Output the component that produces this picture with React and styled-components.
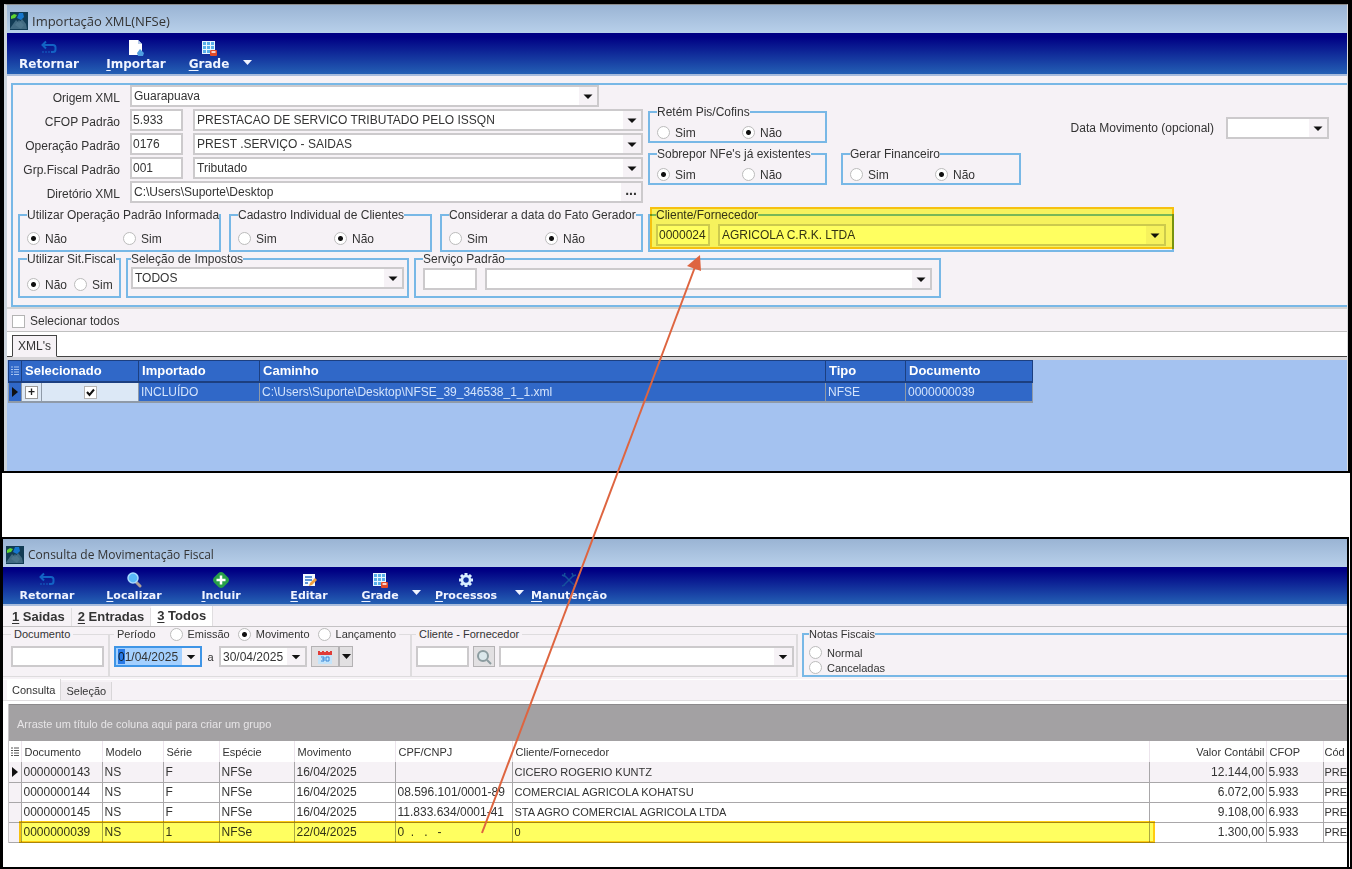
import React from 'react';
import styled, { createGlobalStyle, css } from 'styled-components';

const colors = {
  panel: '#f6f2f6',
  line: '#c4c2c4',
  group: '#78b8e6',
  grid: '#3068c8',
  gridLine: '#a9a7a9',
  arrow: '#de6540',
  highlight: '#ffff60',
};

const GlobalStyle = createGlobalStyle`
  * {
    box-sizing: border-box;
  }
  body {
    margin: 0;
    background: #000;
    color: #333;
    font-family: "Liberation Sans", Arial, sans-serif;
    font-size: 12px;
    line-height: 14px;
  }
  button, input, select {
    margin: 0;
    font: inherit;
    color: inherit;
  }
`;

const Page = styled.main`
  position: relative;
  display: flex;
  flex-direction: column;
  min-height: 100vh;
  padding: 0 2px 2px;
  background: #000;
  overflow: hidden;
`;

const Gap = styled.div`
  height: 64px;
  background: #fff;
`;

const ImportWindow = styled.section`
  margin: 4px 2px 2px;
  border-top: 1px solid #8c8c8c;
  border-left: 3px solid #ccd4dc;
  border-right: 1px solid #dcdcdc;
  background: ${colors.panel};
`;

const SearchWindow = styled.section`
  flex: 1;
  border: 2px solid #000;
  border-bottom: 0;
  border-left-width: 1px;
  margin-right: 1px;
  background: #fff;
  box-shadow: 1px 0 #fff;
  font-size: 11px;
  overflow: hidden;
`;

const TitleBar = styled.header`
  display: flex;
  align-items: center;
  gap: 4px;
  height: 28px;
  padding: 3px 3px 0;
  background: linear-gradient(#9ab4d4, #b8d0ea);
  font-family: "Open Sans", sans-serif;
`;

const Title = styled.h1`
  margin: 0;
  font-size: ${({ $size }) => $size}px;
  font-weight: 400;
  line-height: 18px;
`;

const Toolbar = styled.nav`
  display: flex;
  height: ${({ $height }) => $height}px;
  padding-top: 4px;
  border-bottom: 2px solid #a8bcdc;
  background: linear-gradient(#000084 10%, #2460b4);
  color: #f0f4ff;
  font-family: "DejaVu Sans", sans-serif;
  font-size: ${({ $size }) => $size}px;
  font-weight: 700;
`;

const ToolButton = styled.button`
  display: flex;
  flex: 0 0 ${({ $width }) => $width}px;
  flex-direction: column;
  align-items: center;
  justify-content: ${({ $menu }) => ($menu ? 'flex-end' : 'center')};
  gap: 1px;
  padding: 0 0 ${({ $menu }) => ($menu ? 9 : 0)}px;
  border: 0;
  background: none;
  white-space: nowrap;

  u {
    text-underline-offset: 2px;
  }
`;

const Form = styled.form`
  margin: 7px 0 0 4px;
  padding-bottom: 7px;
  border: 2px solid ${colors.group};
  border-right: 0;
`;

const FormTop = styled.div`
  display: flex;
  gap: 5px;
  margin-bottom: 3px;
`;

const Fields = styled.div`
  flex: 0 0 630px;
`;

const FieldRow = styled.div`
  display: grid;
  grid-template-columns: 107px 53px 1fr;
  height: 24px;
  column-gap: 10px;

  label {
    text-align: right;
    padding-top: 6px;
  }
`;

const Span = styled.div`
  grid-column: 2 / -1;
  margin-right: ${({ $short }) => ($short ? 44 : 0)}px;
`;

const inputBox = css`
  height: ${({ $height }) => $height || 22}px;
  border: 2px solid #cccacc;
  background: #fff;
`;

const TextInput = styled.input`
  ${inputBox}
  display: block;
  flex: ${({ $width }) => ($width ? `0 0 ${$width}px` : 'none')};
  width: ${({ $width }) => ($width ? `${$width}px` : '100%')};
  padding: 0 1px;
`;

const FieldBox = styled.div`
  ${inputBox}
  position: relative;
  display: flex;
  flex: ${({ $width }) => ($width ? `0 0 ${$width}px` : '1')};
  min-width: 0;
  border-color: ${({ $active }) => ($active ? '#3f95e6' : '#cccacc')};
  background: ${({ $active }) => ($active ? '#a4d0ff' : '#fff')};
  font-size: 12px;

  select, input {
    flex: 1;
    min-width: 0;
    width: 100%;
    padding: 0 2px;
    border: 0;
    background: transparent;
    appearance: none;
    outline: 0;
  }
  svg {
    position: absolute;
    right: 0;
    top: 0;
    width: 18px;
    height: 100%;
    background: ${colors.panel};
    pointer-events: none;
  }
`;

const MoreButton = styled.button`
  width: 20px;
  padding: 0 0 4px;
  border: 0;
  background: ${colors.panel};
  font-size: 14px;
  font-weight: 700;
  line-height: 12px;
`;

const SelectedDigit = styled.span`
  position: absolute;
  left: 2px;
  top: 1px;
  width: 7px;
  height: 15px;
  background: #3f95e6;
  mix-blend-mode: multiply;
`;

const Group = styled.fieldset`
  position: relative;
  display: flex;
  flex: 0 0 ${({ $width }) => $width}px;
  width: ${({ $width }) => $width}px;
  height: ${({ $height }) => $height}px;
  align-items: flex-start;
  gap: ${({ $gap }) => $gap || 0}px;
  min-width: 0;
  margin: 0;
  padding: ${({ $pad }) => $pad || '6px 7px 0'};
  border: 2px solid ${colors.group};
  white-space: nowrap;

  legend {
    padding: 0;
    line-height: 14px;
  }
`;

const GroupRow = styled.div`
  display: flex;
  gap: 5px;
  padding-left: 5px;
`;

const OptionGroups = styled.div`
  display: flex;
  gap: 8px;
`;

const Options = styled.div`
  display: grid;
  grid-template-columns: repeat(2, ${({ $step }) => $step}px);
`;

const SideGroups = styled.div`
  display: grid;
  grid-template-columns: 179px 180px;
  align-content: start;
  column-gap: 14px;
  row-gap: 4px;
  padding-top: 20px;

  fieldset:nth-child(2) {
    grid-column: 1;
  }
`;

const DateMovement = styled.div`
  display: flex;
  align-items: center;
  align-self: flex-start;
  gap: 12px;
  margin: 32px 18px 0 auto;
`;

const Highlight = styled.div`
  position: absolute;
  inset: ${({ $inset }) => $inset};
  border: 2px solid #ffcc10;
  background: ${colors.highlight};
  mix-blend-mode: multiply;
  pointer-events: none;
`;

const Choice = styled.label`
  display: flex;
  align-items: center;
  gap: 5px;
  height: ${({ $height }) => $height || 15}px;
`;

const RadioInput = styled.input`
  flex: 0 0 13px;
  width: 13px;
  height: 13px;
  border: 1px solid #bcbcbc;
  border-radius: 50%;
  background: #fff;
  appearance: none;

  &:checked {
    background: radial-gradient(circle, #111 2px, #fff 3px);
  }
`;

const CheckInput = styled.input`
  width: 13px;
  height: 13px;
  border: 1px solid #b4b4b4;
  background: #fff;
  appearance: none;
`;

const SelectAll = styled.div`
  display: flex;
  align-items: center;
  height: 25px;
  padding: 2px 5px 0;
  border-top: 2px solid #d4d4d4;
  border-bottom: 1px solid #c0c0c0;
`;

const XmlTabs = styled.div`
  display: flex;
  align-items: flex-end;
  height: 28px;
  padding-left: 5px;
  border-bottom: 3px solid #d8d6d8;
  background: linear-gradient(#444, #444) bottom / 100% 1px no-repeat #fff;
  background-clip: padding-box;
`;

const XmlTab = styled.button`
  height: 22px;
  padding: 0 5px;
  border: 1px solid #444;
  border-bottom-color: ${colors.panel};
  background: ${colors.panel};
`;

const XmlGrid = styled.div`
  min-height: 111px;
  padding-left: 1px;
  background: #a4c2f0;
`;

const XmlTable = styled.table`
  width: 1024px;
  table-layout: fixed;
  border-collapse: collapse;
  background: ${colors.grid};

  th {
    height: 21px;
    padding: 1px 3px 0;
    border: 1px solid #1c3f80;
    border-bottom-width: 2px;
    color: #fff;
    font-size: 13px;
    text-align: left;
  }
  td {
    height: 20px;
    padding: 1px 2px 0;
    border: 1px solid #8f9aa8;
    border-bottom-width: 2px;
    color: #d4e4fc;
    text-align: left;
  }
  td:first-child, th:first-child {
    padding: 0;
    text-align: center;
  }
  svg {
    display: block;
    margin: auto;
  }
`;

const PlainCell = styled.td`
  && {
    background: #dce8f6;
    text-align: center;
    color: #222;
  }
`;

const Expand = styled.button`
  display: block;
  width: 13px;
  height: 13px;
  margin: auto;
  padding: 0;
  border: 1px solid #999;
  background: #fff;
  line-height: 10px;
  font-weight: 700;
`;

const CheckBox = styled.span`
  position: relative;
  display: block;
  width: 13px;
  height: 13px;
  margin: auto;

  input {
    display: block;
  }
  svg {
    position: absolute;
    inset: 2px;
    pointer-events: none;
  }
`;

const MainTabs = styled.div`
  display: flex;
  align-items: flex-end;
  height: 21px;
  border-bottom: 1px solid ${colors.line};
  background: ${colors.panel};
`;

const MainTab = styled.button`
  height: ${({ $active }) => ($active ? 20 : 18)}px;
  padding: 0 6px;
  border: 0;
  border-right: 1px solid #e0dee0;
  background: ${({ $active }) => ($active ? '#fff' : 'transparent')};
  font-size: 13px;
  font-weight: 700;
  white-space: nowrap;

  u {
    text-underline-offset: 2px;
  }
  &:first-child {
    padding-left: 9px;
  }
`;

const Filters = styled.form`
  display: flex;
  height: 53px;
  background: ${colors.panel};
  border-bottom: 1px solid #fff;
`;

const FilterGroup = styled(Group)`
  border: 1px solid #dedcde;
  border-left: 0;
  border-right-width: 2px;

  legend {
    display: flex;
    align-items: center;
    gap: 8px;
    padding: 0 3px;
    background: ${colors.panel};
  }
`;

const PeriodLabel = styled.span`
  padding-right: 6px;
`;

const NotesGroup = styled(Group)`
  flex: 1 1 0;
  flex-direction: column;
  margin-left: 4px;
  border-right: 0;
`;

const SquareButton = styled.button`
  display: flex;
  flex: 0 0 ${({ $width }) => $width}px;
  align-items: center;
  justify-content: center;
  height: 21px;
  padding: 0;
  border: 1px solid #b4b2b4;
  background: #e2e0e2;
`;

const Between = styled.span`
  width: 17px;
  padding-top: 4px;
  text-align: center;
`;

const CalendarButtons = styled.span`
  display: flex;
  padding-left: 4px;
`;

const SubTabs = styled.div`
  display: flex;
  align-items: flex-end;
  height: 21px;
  padding-left: 4px;
  border-bottom: 1px solid #e0dee0;
  background: ${colors.panel};
`;

const SubTab = styled.button`
  height: ${({ $active }) => ($active ? 21 : 18)}px;
  padding: 0 5px;
  border: 0;
  border-right: 1px solid #d8d6d8;
  background: ${({ $active }) => ($active ? '#fff' : '#f0ecf0')};
`;

const Results = styled.div`
  margin-top: 3px;
  margin-left: 5px;
  border-left: 1px solid #c8c6c8;
`;

const DropZone = styled.p`
  height: 37px;
  margin: 0;
  padding: 12px 8px;
  border-top: 1px solid #8c8a8c;
  background: #a3a1a3;
  color: #e6e4e6;
`;

const TableWrap = styled.div`
  position: relative;
`;

const ResultTable = styled.table`
  width: 100%;
  table-layout: fixed;
  border-collapse: collapse;

  th {
    height: 21px;
    padding: 0 3px;
    border-right: 1px solid #ece4ec;
    font-weight: 400;
    text-align: left;
  }
  td {
    height: 20px;
    padding: 0 3px 0 2px;
    border-right: 1px solid ${colors.gridLine};
    border-bottom: 1px solid ${colors.gridLine};
    font-size: 12px;
  }
  th, td {
    overflow: hidden;
    white-space: pre;
  }
  th:first-child, td:first-child {
    padding: 0;
    background: ${colors.panel};
  }
  th:first-child {
    background: #fff;
  }
  td:nth-child(8), td:last-child {
    font-size: 11px;
  }
  th:nth-child(9), td:nth-child(9) {
    padding: 0 1px;
    text-align: right;
  }
  th:last-child, td:last-child {
    padding: 0 0 0 1px;
    border-right: 0;
  }
  tbody tr:first-child {
    background: ${colors.panel};
  }
  svg {
    display: block;
    margin: auto;
  }
`;

// arrow that ties the highlighted row to the highlighted client
const Pointer = styled.svg`
  position: absolute;
  left: 470px;
  top: 250px;
  pointer-events: none;
`;

const Triangle = () => (
  <svg viewBox="0 0 18 18" aria-hidden="true">
    <path d="M4.5 7.5h9L9 12z" fill="#111" />
  </svg>
);

const SmallArrow = ({ color = '#111' }) => (
  <svg width="9" height="5" viewBox="0 0 9 5" aria-hidden="true">
    <path d="M0 0h9L4.5 5z" fill={color} />
  </svg>
);

const RowMarker = () => (
  <svg width="6" height="10" viewBox="0 0 6 10" aria-hidden="true">
    <path d="M0 0l6 5-6 5z" fill="#111" />
  </svg>
);

const ListIcon = ({ color }) => (
  <svg width="8" height="10" viewBox="0 0 8 10" aria-hidden="true">
    <path d="M0 1h2M3 1h5M0 3.5h2M3 3.5h5M0 6h2M3 6h5M0 8.5h2M3 8.5h5" stroke={color} />
  </svg>
);

const AppIcon = () => (
  <svg width="18" height="18" viewBox="0 0 18 18" aria-hidden="true">
    <rect width="18" height="18" fill="#123c55" />
    <path d="M1 15L6 8l3 3 3-4 4 5 1 5H0z" fill="#426b82" />
    <path d="M5 13l4-5 5 5-3 4z" fill="#527a90" opacity=".7" />
    <path d="M9 1h4l1 4-3 3-4-2z" fill="#1676cc" />
    <path d="M1 4l3-2 3 1-2 3-4 1z" fill="#5fd62f" />
  </svg>
);

const icons = {
  back: (
    <g fill="none" stroke="#1263c4" strokeWidth="2">
      <path d="M2 5h10q2.5 0 2.5 2.5v2q0 2.500-2.500 2.500h-2" />
      <path d="M5 1.500L1.500 5 5 8.500" />
      <path d="M1 12h9" strokeDasharray="2 1" opacity=".5" />
    </g>
  ),
  file: (
    <g>
      <path d="M1 0h9l4 4v11H1z" fill="#fff" />
      <path d="M10 0v4h4z" fill="#b8cce8" />
      <path d="M12 9l4 4-1 3h-5l-1-3z" fill="#4f9ee0" />
    </g>
  ),
  grid: (
    <g>
      <path d="M1 1h13v13H1z" fill="#e8f6ff" />
      <path d="M2 2h3v3H2zM6 2h3v3H6zM10 2h3v3h-3zM2 6h3v3H2zM6 6h3v3H6zM10 6h3v3h-3zM2 10h3v3H2zM6 10h3v3H6z" fill="#58b0ea" />
      <rect x="9" y="10" width="7" height="6" rx="1" fill="#e24a28" />
      <path d="M10.500 12h4" stroke="#fff" strokeWidth="1.500" />
    </g>
  ),
  search: (
    <g>
      <path d="M10 10l4 4" stroke="#b0a098" strokeWidth="3" strokeLinecap="round" />
      <circle cx="7" cy="6" r="5" fill="#58b8f8" stroke="#a8dcff" strokeWidth="1.500" />
    </g>
  ),
  add: (
    <g>
      <path d="M8 0q1.500 0 2.500 1L15 5.500q2 2.500 0 5L10.500 15q-2.500 2-5 0L1 10.500q-2-2.500 0-5L5.500 1Q6.500 0 8 0z" fill="#28a048" />
      <path d="M8 3.500v9M3.500 8h9" stroke="#fff" strokeWidth="2.500" />
    </g>
  ),
  edit: (
    <g>
      <path d="M2 2h12v12H2z" fill="#f4faff" />
      <path d="M4 5h7M4 8h7M4 11h3" stroke="#2870c8" strokeWidth="1.500" />
      <path d="M8 14l1-3 5-5 2 2-5 5z" fill="#f0a040" />
    </g>
  ),
  gear: (
    <g>
      <path d="M8 1v14M1 8h14M3 3l10 10M13 3L3 13" stroke="#d8eeff" strokeWidth="3" />
      <circle cx="8" cy="8" r="4" fill="#1030a0" stroke="#d8eeff" strokeWidth="2.500" />
    </g>
  ),
  tools: (
    <g stroke="#15509c" strokeWidth="1.500" fill="none">
      <path d="M3 3l10 10M13 3L3 13" />
      <path d="M1 3l2 1 1-3M15 3l-3 1-1-3M1 14l3-1M15 14l-3 1" />
    </g>
  ),
};

const Tool = ({ icon, label, width, access = true }) => (
  <ToolButton type="button" $width={width}>
    <svg width="16" height="16" viewBox="0 0 16 16" aria-hidden="true">{icons[icon]}</svg>
    <span>
      {access ? <u>{label[0]}</u> : label[0]}
      {label.slice(1)}
    </span>
  </ToolButton>
);

const MenuArrow = ({ width, label }) => (
  <ToolButton type="button" $width={width} $menu aria-label={label}>
    <SmallArrow color="#f0f4ff" />
  </ToolButton>
);

const Select = ({ id, label, value = '', width, height }) => (
  <FieldBox $width={width} $height={height}>
    <select id={id} aria-label={label} defaultValue={value}>
      <option value={value}>{value}</option>
    </select>
    <Triangle />
  </FieldBox>
);

const DateField = ({ label, value, active }) => (
  <FieldBox $width={88} $height={21} $active={active}>
    <input aria-label={label} defaultValue={value} />
    {active && <SelectedDigit />}
    <Triangle />
  </FieldBox>
);

const Radio = ({ name, label, checked, height }) => (
  <Choice $height={height}>
    <RadioInput type="radio" name={name} defaultChecked={checked} />
    {label}
  </Choice>
);

const RadioGroup = ({
  name, title, options, checked, step, ...size
}) => (
  <Group $width={size.width} $height={size.height} $pad={size.pad}>
    <legend>{title}</legend>
    <Options $step={step}>
      {options.map((option) => (
        <Radio key={option} name={name} label={option} checked={option === checked} />
      ))}
    </Options>
  </Group>
);

const codes = [
  { id: 'cfop', label: 'CFOP Padrão', code: '5.933', text: 'PRESTACAO DE SERVICO TRIBUTADO PELO ISSQN' },
  { id: 'operacao', label: 'Operação Padrão', code: '0176', text: 'PREST .SERVIÇO - SAIDAS' },
  { id: 'grupo', label: 'Grp.Fiscal Padrão', code: '001', text: 'Tributado' },
];

const columns = [
  ['Documento', 81], ['Modelo', 61], ['Série', 56], ['Espécie', 75], ['Movimento', 101],
  ['CPF/CNPJ', 117], ['Cliente/Fornecedor', null], ['Valor Contábil', 117], ['CFOP', 57], ['Cód', 24],
];

const rows = [
  ['0000000143', 'NS', 'F', 'NFSe', '16/04/2025', '', 'CICERO ROGERIO KUNTZ', '12.144,00', '5.933', 'PRE'],
  ['0000000144', 'NS', 'F', 'NFSe', '16/04/2025', '08.596.101/0001-89', 'COMERCIAL AGRICOLA KOHATSU', '6.072,00', '5.933', 'PRE'],
  ['0000000145', 'NS', 'F', 'NFSe', '16/04/2025', '11.833.634/0001-41', 'STA AGRO COMERCIAL AGRICOLA LTDA', '9.108,00', '6.933', 'PRE'],
  ['0000000039', 'NS', '1', 'NFSe', '22/04/2025', '0  .   .   -', '0', '1.300,00', '5.933', 'PRE'],
];

const ImportForm = () => (
  <Form>
    <FormTop>
      <Fields>
        <FieldRow>
          <label htmlFor="origem">Origem XML</label>
          <Span $short><Select id="origem" value="Guarapuava" /></Span>
        </FieldRow>
        {codes.map(({
          id, label, code, text,
        }) => (
          <FieldRow key={id}>
            <label htmlFor={id}>{label}</label>
            <TextInput id={id} defaultValue={code} />
            <Select label={`${label} descrição`} value={text} />
          </FieldRow>
        ))}
        <FieldRow>
          <label htmlFor="diretorio">Diretório XML</label>
          <Span>
            <FieldBox>
              <input id="diretorio" defaultValue="C:\Users\Suporte\Desktop" />
              <MoreButton type="button" aria-label="Procurar">...</MoreButton>
            </FieldBox>
          </Span>
        </FieldRow>
      </Fields>
      <SideGroups>
        <RadioGroup name="retem" title="Retém Pis/Cofins" options={['Sim', 'Não']} checked="Não" step={85} width={179} height={38} />
        <RadioGroup name="sobrepor" title="Sobrepor NFe's já existentes" options={['Sim', 'Não']} checked="Sim" step={85} width={179} height={38} />
        <RadioGroup name="financeiro" title="Gerar Financeiro" options={['Sim', 'Não']} checked="Não" step={85} width={180} height={38} />
      </SideGroups>
      <DateMovement>
        <label htmlFor="data">Data Movimento (opcional)</label>
        <Select id="data" width={103} />
      </DateMovement>
    </FormTop>
    <GroupRow>
      <OptionGroups>
        <RadioGroup name="utilizar" title="Utilizar Operação Padrão Informada" options={['Não', 'Sim']} checked="Não" step={96} width={203} height={44} pad="9px 7px 0" />
        <RadioGroup name="cadastro" title="Cadastro Individual de Clientes" options={['Sim', 'Não']} checked="Não" step={96} width={203} height={44} pad="9px 7px 0" />
        <RadioGroup name="considerar" title="Considerar a data do Fato Gerador" options={['Sim', 'Não']} checked="Não" step={96} width={203} height={44} pad="9px 7px 0" />
      </OptionGroups>
      <Group $width={526} $height={44} $gap={8} $pad="2px 6px 0">
        <legend>Cliente/Fornecedor</legend>
        <TextInput aria-label="Código do cliente" defaultValue="0000024" $width={54} />
        <Select label="Cliente" value="AGRICOLA C.R.K. LTDA" />
        <Highlight $inset="-15px -2px 1px 0" />
      </Group>
    </GroupRow>
    <GroupRow>
      <RadioGroup name="sit" title="Utilizar Sit.Fiscal" options={['Não', 'Sim']} checked="Não" step={47} width={103} height={46} pad="11px 7px 0" />
      <Group $width={283} $height={46} $pad="1px 3px 0">
        <legend>Seleção de Impostos</legend>
        <Select label="Seleção de Impostos" value="TODOS" />
      </Group>
      <Group $width={527} $height={46} $gap={8} $pad="2px 7px 0">
        <legend>Serviço Padrão</legend>
        <TextInput aria-label="Código do serviço" $width={54} />
        <Select label="Serviço" />
      </Group>
    </GroupRow>
  </Form>
);

const XmlList = () => (
  <XmlGrid>
    <XmlTable>
      <colgroup>
        <col width="13" />
        <col width="20" />
        <col width="97" />
        <col width="121" />
        <col width="566" />
        <col width="80" />
        <col width="127" />
      </colgroup>
      <thead>
        <tr>
          <th aria-label="Menu"><ListIcon color="#a8c4f0" /></th>
          <th colSpan="2">Selecionado</th>
          <th>Importado</th>
          <th>Caminho</th>
          <th>Tipo</th>
          <th>Documento</th>
        </tr>
      </thead>
      <tbody>
        <tr>
          <td><RowMarker /></td>
          <PlainCell><Expand type="button">+</Expand></PlainCell>
          <PlainCell>
            <CheckBox>
              <CheckInput type="checkbox" aria-label="Selecionado" defaultChecked />
              <svg width="9" height="9" viewBox="0 0 9 9" aria-hidden="true">
                <path d="M1 4l2.500 3L8 1.500" fill="none" stroke="#111" strokeWidth="2" />
              </svg>
            </CheckBox>
          </PlainCell>
          <td>INCLUÍDO</td>
          <td>C:\Users\Suporte\Desktop\NFSE_39_346538_1_1.xml</td>
          <td>NFSE</td>
          <td>0000000039</td>
        </tr>
      </tbody>
    </XmlTable>
  </XmlGrid>
);

const SearchFilters = () => (
  <Filters>
    <FilterGroup $width={107} $height={50} $pad="5px 4px 0 8px">
      <legend>Documento</legend>
      <TextInput aria-label="Documento" $width={93} $height={21} />
    </FilterGroup>
    <FilterGroup $width={302} $height={50} $pad="5px 3px 0 4px">
      <legend>
        <PeriodLabel>Período</PeriodLabel>
        <Radio name="periodo" label="Emissão" height={14} />
        <Radio name="periodo" label="Movimento" checked height={14} />
        <Radio name="periodo" label="Lançamento" height={14} />
      </legend>
      <DateField label="Data inicial" value="01/04/2025" active />
      <Between>a</Between>
      <DateField label="Data final" value="30/04/2025" />
      <CalendarButtons>
        <SquareButton type="button" $width={28} aria-label="Calendário">
          <svg width="14" height="14" viewBox="0 0 14 14" aria-hidden="true">
            <path d="M0 2h14v12H0z" fill="#c4e4fa" />
            <path d="M0 1h2v1h2V1h2v1h2V1h2v1h2V1h2v4H0z" fill="#e03c38" />
            <path d="M3 7h3v4H3M4 9h2M8 7h3v4H8z" fill="none" stroke="#3888d8" />
          </svg>
        </SquareButton>
        <SquareButton type="button" $width={14} aria-label="Períodos"><SmallArrow /></SquareButton>
      </CalendarButtons>
    </FilterGroup>
    <FilterGroup $width={386} $height={50} $gap={4} $pad="5px 2px 0 4px">
      <legend>Cliente - Fornecedor</legend>
      <TextInput aria-label="Código" $width={53} $height={21} />
      <SquareButton type="button" $width={22} aria-label="Buscar">
        <svg width="16" height="16" viewBox="0 0 16 16" aria-hidden="true">
          <circle cx="7" cy="7" r="5" fill="#dce8ec" stroke="#8c9ca0" strokeWidth="2" />
          <path d="M11 11l4 4" stroke="#8c9ca0" strokeWidth="2" />
        </svg>
      </SquareButton>
      <Select label="Cliente - Fornecedor" height={21} />
    </FilterGroup>
    <NotesGroup $height={50} $pad="4px 5px 0">
      <legend>Notas Fiscais</legend>
      <Radio name="notas" label="Normal" />
      <Radio name="notas" label="Canceladas" />
    </NotesGroup>
  </Filters>
);

const ResultList = () => (
  <Results>
    <DropZone>Arraste um título de coluna aqui para criar um grupo</DropZone>
    <TableWrap>
      <ResultTable>
        <colgroup>
          <col width="12" />
          {columns.map(([name, width]) => <col key={name} width={width || undefined} />)}
        </colgroup>
        <thead>
          <tr>
            <th aria-label="Menu"><ListIcon color="#555" /></th>
            {columns.map(([name]) => <th key={name}>{name}</th>)}
          </tr>
        </thead>
        <tbody>
          {rows.map((row, index) => (
            <tr key={row[0]}>
              <td>{index === 0 && <RowMarker />}</td>
              {row.map((value, cell) => <td key={columns[cell][0]}>{value}</td>)}
            </tr>
          ))}
        </tbody>
      </ResultTable>
      <Highlight $inset="80px 192px 0 10px" />
    </TableWrap>
  </Results>
);

const App = () => (
  <Page>
    <GlobalStyle />
    <ImportWindow>
      <TitleBar>
        <AppIcon />
        <Title $size={13}>Importação XML(NFSe)</Title>
      </TitleBar>
      <Toolbar $height={43} $size={12}>
        <Tool icon="back" label="Retornar" width={84} access={false} />
        <Tool icon="file" label="Importar" width={90} />
        <Tool icon="grid" label="Grade" width={56} />
        <MenuArrow width={20} label="Opções de grade" />
      </Toolbar>
      <ImportForm />
      <SelectAll>
        <Choice>
          <CheckInput type="checkbox" />
          Selecionar todos
        </Choice>
      </SelectAll>
      <XmlTabs>
        <XmlTab type="button">XML&apos;s</XmlTab>
      </XmlTabs>
      <XmlList />
    </ImportWindow>
    <Gap />
    <SearchWindow>
      <TitleBar>
        <AppIcon />
        <Title $size={12}>Consulta de Movimentação Fiscal</Title>
      </TitleBar>
      <Toolbar $height={39} $size={11}>
        <Tool icon="back" label="Retornar" width={88} access={false} />
        <Tool icon="search" label="Localizar" width={86} />
        <Tool icon="add" label="Incluir" width={88} />
        <Tool icon="edit" label="Editar" width={88} />
        <Tool icon="grid" label="Grade" width={54} />
        <MenuArrow width={18} label="Opções de grade" />
        <Tool icon="gear" label="Processos" width={82} />
        <MenuArrow width={24} label="Opções de processos" />
        <Tool icon="tools" label="Manutenção" width={76} />
      </Toolbar>
      <MainTabs>
        <MainTab type="button">
          <u>1</u>
          {' Saidas'}
        </MainTab>
        <MainTab type="button">
          <u>2</u>
          {' Entradas'}
        </MainTab>
        <MainTab type="button" $active>
          <u>3</u>
          {' Todos'}
        </MainTab>
      </MainTabs>
      <SearchFilters />
      <SubTabs>
        <SubTab type="button" $active>Consulta</SubTab>
        <SubTab type="button">Seleção</SubTab>
      </SubTabs>
      <ResultList />
    </SearchWindow>
    <Pointer width="240" height="590" viewBox="470 250 240 590" aria-hidden="true">
      <path d="M482 833L695 267" stroke={colors.arrow} strokeWidth="2" />
      <path d="M700 255l-13 11 14 5z" fill={colors.arrow} />
    </Pointer>
  </Page>
);

export default App;
